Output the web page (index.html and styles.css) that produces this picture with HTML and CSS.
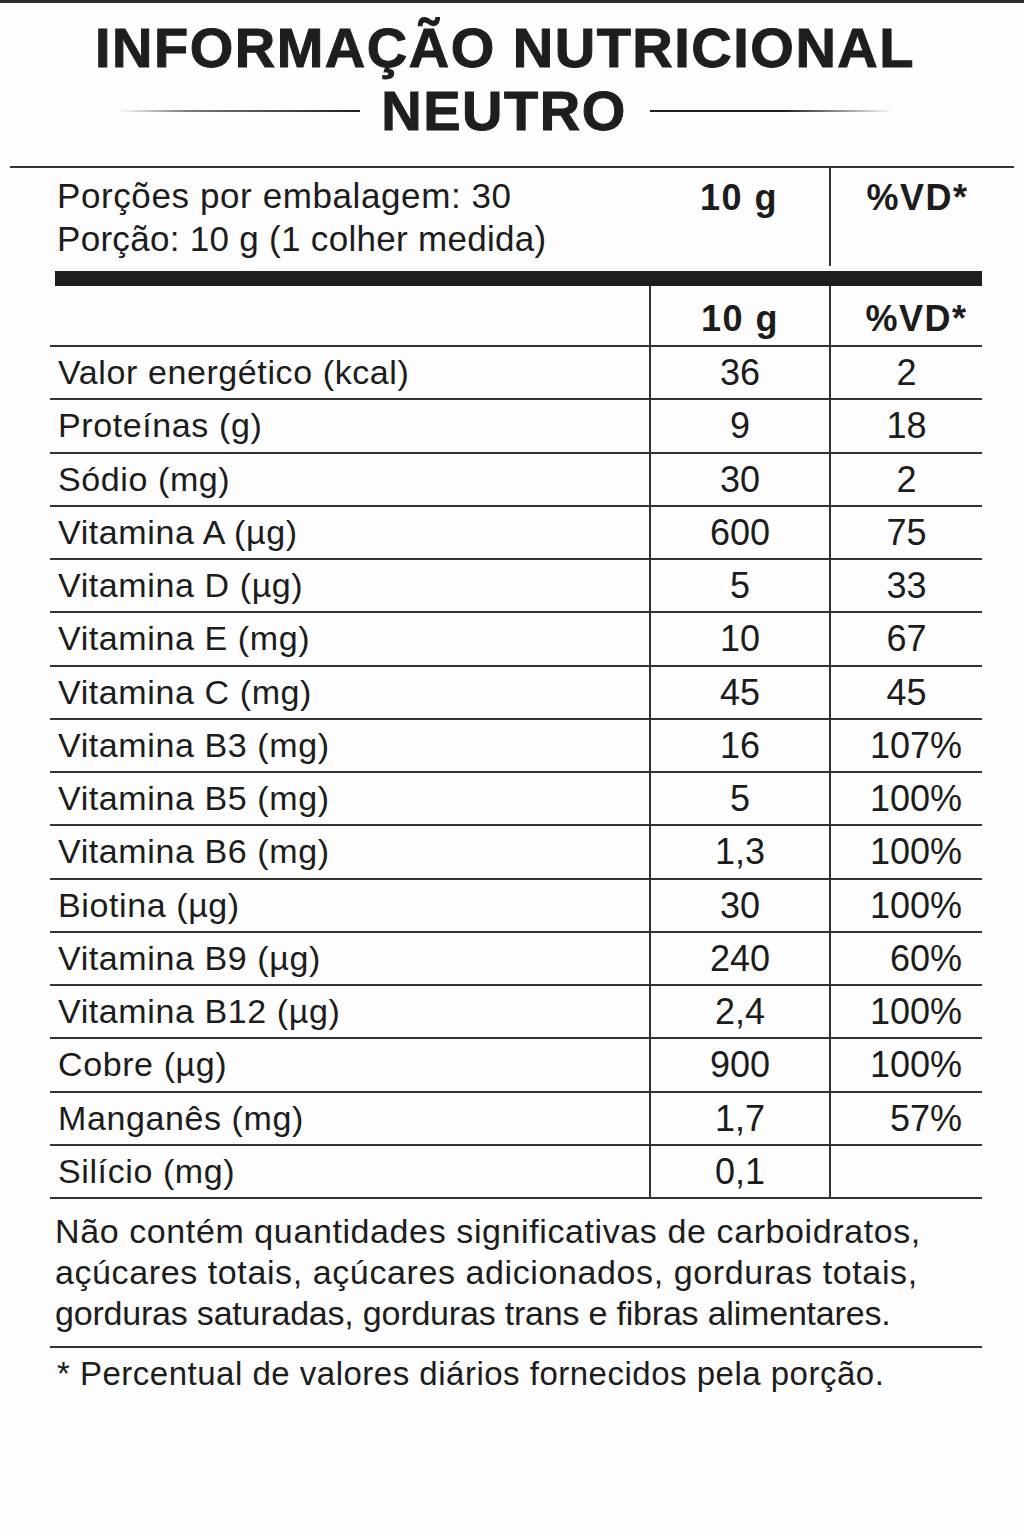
FILE: index.html
```html
<!DOCTYPE html>
<html lang="pt-BR">
<head>
<meta charset="utf-8">
<title>Informação Nutricional - Neutro</title>
<link rel="stylesheet" href="styles.css">
</head>
<body>
<div class="topbar"></div>
<header class="heading">
  <h1 class="title">INFORMAÇÃO NUTRICIONAL</h1>
  <div class="subtitle">
    <span class="rule rule-left"></span>
    <h2 class="flavor">NEUTRO</h2>
    <span class="rule rule-right"></span>
  </div>
</header>

<section class="serving">
  <div class="serving-text">
    <div>Porções por embalagem: 30</div>
    <div class="tight">Porção: 10 g (1 colher medida)</div>
  </div>
  <div class="serving-amount">10 g</div>
  <div class="serving-vd">%VD*</div>
</section>

<div class="thick-bar"></div>

<div class="table">
  <div class="row head"><div class="cell name"></div><div class="cell amt">10 g</div><div class="cell vd">%VD*</div></div>
  <div class="row"><div class="cell name">Valor energético (kcal)</div><div class="cell amt">36</div><div class="cell vd">2</div></div>
  <div class="row"><div class="cell name">Proteínas (g)</div><div class="cell amt">9</div><div class="cell vd">18</div></div>
  <div class="row"><div class="cell name">Sódio (mg)</div><div class="cell amt">30</div><div class="cell vd">2</div></div>
  <div class="row"><div class="cell name">Vitamina A (µg)</div><div class="cell amt">600</div><div class="cell vd">75</div></div>
  <div class="row"><div class="cell name">Vitamina D (µg)</div><div class="cell amt">5</div><div class="cell vd">33</div></div>
  <div class="row"><div class="cell name">Vitamina E (mg)</div><div class="cell amt">10</div><div class="cell vd">67</div></div>
  <div class="row"><div class="cell name">Vitamina C (mg)</div><div class="cell amt">45</div><div class="cell vd">45</div></div>
  <div class="row"><div class="cell name">Vitamina B3 (mg)</div><div class="cell amt">16</div><div class="cell vd pct">107%</div></div>
  <div class="row"><div class="cell name">Vitamina B5 (mg)</div><div class="cell amt">5</div><div class="cell vd pct">100%</div></div>
  <div class="row"><div class="cell name">Vitamina B6 (mg)</div><div class="cell amt">1,3</div><div class="cell vd pct">100%</div></div>
  <div class="row"><div class="cell name">Biotina (µg)</div><div class="cell amt">30</div><div class="cell vd pct">100%</div></div>
  <div class="row"><div class="cell name">Vitamina B9 (µg)</div><div class="cell amt">240</div><div class="cell vd pct">60%</div></div>
  <div class="row"><div class="cell name">Vitamina B12 (µg)</div><div class="cell amt">2,4</div><div class="cell vd pct">100%</div></div>
  <div class="row"><div class="cell name">Cobre (µg)</div><div class="cell amt">900</div><div class="cell vd pct">100%</div></div>
  <div class="row"><div class="cell name">Manganês (mg)</div><div class="cell amt">1,7</div><div class="cell vd pct">57%</div></div>
  <div class="row"><div class="cell name">Silício (mg)</div><div class="cell amt">0,1</div><div class="cell vd"></div></div>
</div>

<div class="note">Não contém quantidades significativas de carboidratos,<br>açúcares totais, açúcares adicionados, gorduras totais,<br><span class="tight-note">gorduras saturadas, gorduras trans e fibras alimentares.</span></div>

<p class="footnote">* Percentual de valores diários fornecidos pela porção.</p>
</body>
</html>
```

FILE: styles.css
```css
html, body {
  margin: 0;
  padding: 0;
}

body {
  background: #fdfdfd;
  color: #1c1c1c;
  font-family: "Liberation Sans", Arial, sans-serif;
  width: 1024px;
  min-height: 1536px;
}

.topbar {
  height: 3px;
  background: #2a2a2a;
}

.heading {
  padding: 13px 14px 0 0;
  text-align: center;
}

.title {
  margin: 0;
  font-size: 56px;
  line-height: 63px;
  font-weight: 700;
  letter-spacing: 1.5px;
  color: #1e1e1e;
  -webkit-text-stroke: 1px #1e1e1e;
}

.subtitle {
  display: flex;
  justify-content: center;
  align-items: center;
  height: 63px;
}

.flavor {
  margin: 0 23px 0 21px;
  font-size: 56px;
  line-height: 63px;
  font-weight: 700;
  letter-spacing: 1.5px;
  color: #1e1e1e;
  -webkit-text-stroke: 1px #1e1e1e;
}

.rule {
  display: block;
  width: 243px;
  height: 2px;
}

.rule-left {
  background: linear-gradient(to right, rgba(30,30,30,0) 0%, rgba(30,30,30,0.6) 30%, #1e1e1e 100%);
}

.rule-right {
  background: linear-gradient(to right, #1e1e1e 0%, #1e1e1e 55%, rgba(30,30,30,0) 100%);
}

.serving {
  margin: 24px 10px 0 10px;
  border-top: 2px solid #333;
  display: grid;
  grid-template-columns: 639px 180px 1fr;
  height: 100px;
  box-sizing: border-box;
}

.serving-text {
  padding: 6px 0 0 47px;
  font-size: 35px;
  line-height: 43px;
  letter-spacing: 0.6px;
}

.serving-text .tight {
  letter-spacing: 0.3px;
}

.serving-amount,
.serving-vd {
  padding-top: 8px;
  font-size: 36px;
  line-height: 43px;
  font-weight: 700;
  letter-spacing: 1.5px;
  text-align: center;
}

.serving-vd {
  border-left: 2px solid #333;
  padding-right: 10px;
}

.thick-bar {
  margin: 5px 42px 0 55px;
  height: 15px;
  background: #1e1e1e;
}

.table {
  margin: 0 42px 0 50px;
}

.row {
  display: grid;
  grid-template-columns: 599px 180px 1fr;
  height: 53.25px;
  box-sizing: border-box;
  border-bottom: 2px solid #333;
}

.row.head {
  height: 61px;
}

.cell {
  line-height: 51px;
}

.name {
  padding-left: 8px;
  font-size: 34px;
  letter-spacing: 0.6px;
}

.amt,
.vd {
  border-left: 2px solid #333;
  text-align: center;
  font-size: 36px;
}

.vd.pct {
  text-align: right;
  padding-right: 20px;
}

.head .amt,
.head .vd {
  padding-top: 6px;
  line-height: 53px;
  font-weight: 700;
  letter-spacing: 1.5px;
}

.head .vd {
  padding-left: 20px;
}

.note {
  margin: 0 42px 0 50px;
  padding: 12px 0 12px 5px;
  border-bottom: 2px solid #333;
  font-size: 34px;
  line-height: 41px;
  letter-spacing: 0.6px;
}

.tight-note {
  letter-spacing: -0.2px;
}

.footnote {
  margin: 5px 0 0 57px;
  font-size: 33px;
  line-height: 41px;
  letter-spacing: 0.5px;
}
```
